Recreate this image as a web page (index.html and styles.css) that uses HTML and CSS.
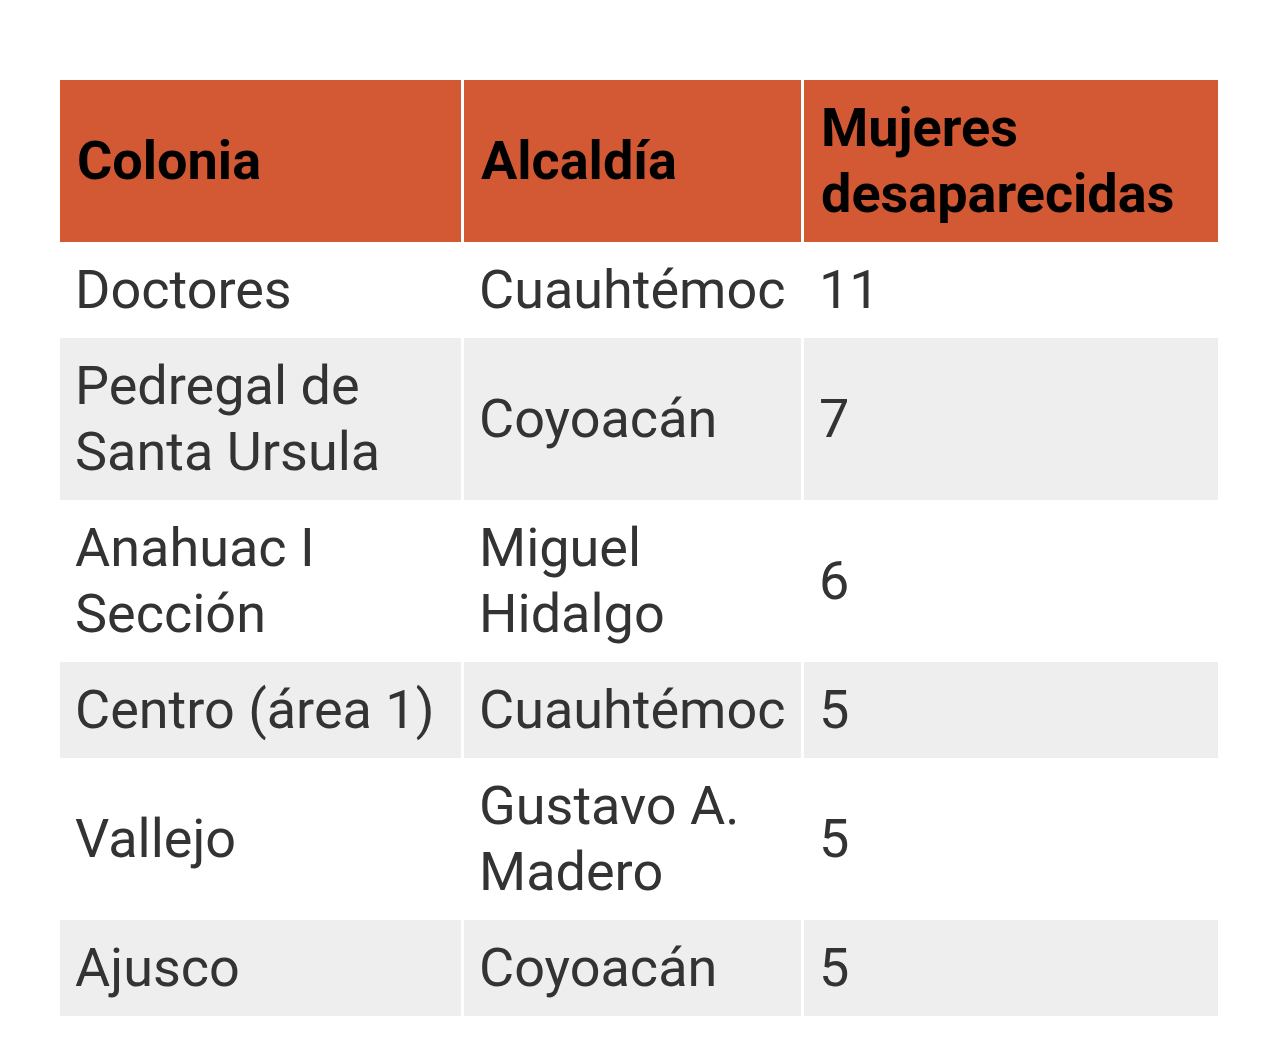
FILE: index.html
```html
<!DOCTYPE html>
<html lang="es">
<head>
<meta charset="utf-8">
<title>Colonias</title>
<link rel="stylesheet" href="styles.css">
</head>
<body>
<table class="data">
  <colgroup>
    <col class="c1">
    <col class="c2">
    <col class="c3">
  </colgroup>
  <thead>
    <tr><th>Colonia</th><th>Alcaldía</th><th>Mujeres desaparecidas</th></tr>
  </thead>
  <tbody>
    <tr><td>Doctores</td><td>Cuauhtémoc</td><td>11</td></tr>
    <tr class="alt"><td>Pedregal de Santa Ursula</td><td>Coyoacán</td><td>7</td></tr>
    <tr><td>Anahuac I Sección</td><td>Miguel Hidalgo</td><td>6</td></tr>
    <tr class="alt"><td>Centro (área 1)</td><td>Cuauhtémoc</td><td>5</td></tr>
    <tr><td>Vallejo</td><td>Gustavo A. Madero</td><td>5</td></tr>
    <tr class="alt"><td>Ajusco</td><td>Coyoacán</td><td>5</td></tr>
  </tbody>
</table>
</body>
</html>
```
FILE: styles.css
```css
html, body {
  margin: 0;
  padding: 0;
  background: #ffffff;
}
body {
  font-family: Roboto, "Liberation Sans", sans-serif;
}
.data {
  margin: 80px 0 0 60px;
  width: 1158px;
  table-layout: fixed;
  border-collapse: separate;
  border-spacing: 0;
  font-size: 54px;
  line-height: 66px;
  color: #333333;
}
.c1 { width: 401px; }
.c2 { width: 340px; }
.c3 { width: 417px; }
.data th, .data td {
  padding: 15px 12px 15px 15px;
  text-align: left;
  vertical-align: middle;
}
.data th + th, .data td + td {
  border-left: 3px solid #ffffff;
}
.data th {
  background: #d35935;
  color: #000000;
  font-weight: 700;
  padding-left: 17px;
}
.data tr.alt td {
  background: #eeeeee;
}
```
